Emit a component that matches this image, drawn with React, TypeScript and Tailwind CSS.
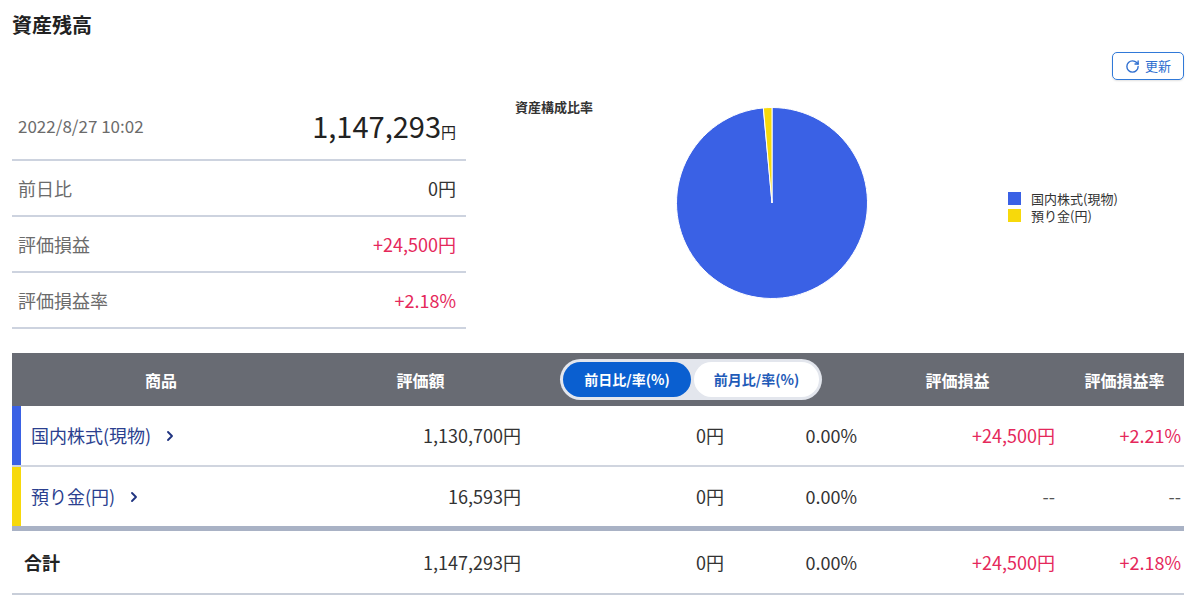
import { RotateCw, ChevronRight } from "lucide-react";

const RED = "text-[#e5285b]";

function SummaryRow({ label, value, red }: { label: string; value: string; red?: boolean }) {
  return (
    <div className="h-[56px] flex items-center justify-between pl-[6px] pr-[10px] border-b-2 border-[#cdd3df]">
      <span className="text-[18px] text-[#6b6b6b]">{label}</span>
      <span className={`text-[18px] ${red ? RED : "text-[#333]"}`}>{value}</span>
    </div>
  );
}

function Pie() {
  const cx = 96, cy = 96, r = 95.5;
  const frac = 16593 / 1147293;
  const a = frac * 2 * Math.PI;
  const x = cx - r * Math.sin(a);
  const y = cy - r * Math.cos(a);
  return (
    <svg width="192" height="192" viewBox="0 0 192 192">
      <path d={`M${cx} ${cy} L${cx} ${cy - r} A${r} ${r} 0 1 1 ${x} ${y} Z`} fill="#3a61e5" stroke="#fff" strokeWidth="1" />
      <path d={`M${cx} ${cy} L${x} ${y} A${r} ${r} 0 0 1 ${cx} ${cy - r} Z`} fill="#f7d90b" stroke="#fff" strokeWidth="1" />
    </svg>
  );
}

const cols = "grid grid-cols-[298px_221px_203px_132px_199px_119px]";

function DataRow({ color, name, amount, day, rate, pl, plr, red }: { color: string; name: string; amount: string; day: string; rate: string; pl: string; plr: string; red?: boolean }) {
  return (
    <div className={`${cols} h-[61px] border-b-2 border-[#d0d5df] text-[18px] text-[#333]`}>
      <div className="flex items-stretch">
        <div className={`w-[9px] ${color}`} />
        <div className="flex items-center pl-[10px] text-[#2b3f8f]">
          <span>{name}</span>
          <ChevronRight size={16} strokeWidth={2.8} className="ml-[11px] text-[#1f3380]" />
        </div>
      </div>
      <div className="flex items-center justify-end pr-[10px]">{amount}</div>
      <div className="flex items-center justify-end pr-[10px]">{day}</div>
      <div className="flex items-center justify-end pr-[9px]">{rate}</div>
      <div className={`flex items-center justify-end pr-[10px] ${red ? RED : "text-[#555]"}`}>{pl}</div>
      <div className={`flex items-center justify-end pr-[3px] ${red ? RED : "text-[#555]"}`}>{plr}</div>
    </div>
  );
}

export default function App() {
  return (
    <div className="w-[1200px] h-[609px] bg-white overflow-hidden font-['Noto_Sans_CJK_JP','Noto_Sans',sans-serif] text-[#333]">
      <div className="pl-[12px] pr-[16px]">
        <h1 className="pt-[12px] h-[52px] text-[20px] font-bold leading-[26px] text-[#222]">資産残高</h1>
        <div className="flex justify-end h-[27px]">
          <button className="flex items-center justify-center gap-[5px] h-[28px] w-[72px] border-[1.5px] border-[#3079d8] rounded-[5px] text-[#2f6fd0] text-[13px] shadow-[0_1px_2px_rgba(0,0,0,0.12)]">
            <RotateCw size={15} strokeWidth={2.2} />
            <span>更新</span>
          </button>
        </div>

        <div className="flex mt-[21px]">
          <div className="w-[454px]">
            <div className="h-[61px] flex items-center justify-between pl-[6px] pr-[10px] pb-[8px] border-b-2 border-[#cdd3df]">
              <span className="text-[17px] text-[#6b6b6b]">2022/8/27 10:02</span>
              <span className="flex items-baseline text-[#222]">
                <span className="text-[29px] leading-none">1,147,293</span>
                <span className="text-[15px] leading-none">円</span>
              </span>
            </div>
            <SummaryRow label="前日比" value="0円" />
            <SummaryRow label="評価損益" value="+24,500円" red />
            <SummaryRow label="評価損益率" value="+2.18%" red />
          </div>

          <div className="flex items-start ml-[49px]">
            <div className="w-[161px] text-[13px] font-bold leading-[14px] text-[#333]">資産構成比率</div>
            <div className="mt-[7px]">
              <Pie />
            </div>
            <div className="ml-[140px] mt-[90px] flex flex-col text-[13px] leading-[17px] text-[#333]">
              <div className="flex items-center">
                <span className="w-[13px] h-[13px] bg-[#3a61e5] mr-[10px]" />
                <span>国内株式(現物)</span>
              </div>
              <div className="flex items-center">
                <span className="w-[13px] h-[13px] bg-[#f7d90b] mr-[10px]" />
                <span>預り金(円)</span>
              </div>
            </div>
          </div>
        </div>

        <div className="mt-[24px]">
          <div className={`${cols} h-[53px] bg-[#686b73] text-white font-bold text-[16px]`}>
            <div className="flex items-center justify-center">商品</div>
            <div className="flex items-center justify-center">評価額</div>
            <div className="col-span-2 flex items-center pl-[29px]">
              <div className="flex w-[262px] h-[41px] rounded-full bg-[#e3e6ed] p-[3px]">
                <div className="w-[128px] rounded-full bg-[#0a5fd0] text-white text-[14px] flex items-center justify-center">前日比/率(%)</div>
                <div className="flex-1 ml-[3px] rounded-full bg-white text-[#1f5bb8] text-[14px] flex items-center justify-center">前月比/率(%)</div>
              </div>
            </div>
            <div className="flex items-center justify-center pr-[16px]">評価損益</div>
            <div className="flex items-center justify-center">評価損益率</div>
          </div>

          <DataRow color="bg-[#3a61e5]" name="国内株式(現物)" amount="1,130,700円" day="0円" rate="0.00%" pl="+24,500円" plr="+2.21%" red />
          <DataRow color="bg-[#f7d90b]" name="預り金(円)" amount="16,593円" day="0円" rate="0.00%" pl="--" plr="--" />
          <div className="h-[5px] bg-[#a9b2c5] -mt-[2px]" />

          <div className={`${cols} h-[64px] border-b-2 border-[#c8ced9] text-[18px] text-[#333]`}>
            <div className="flex items-center pl-[12px] font-bold text-[#222]">合計</div>
            <div className="flex items-center justify-end pr-[10px]">1,147,293円</div>
            <div className="flex items-center justify-end pr-[10px]">0円</div>
            <div className="flex items-center justify-end pr-[9px]">0.00%</div>
            <div className={`flex items-center justify-end pr-[10px] ${RED}`}>+24,500円</div>
            <div className={`flex items-center justify-end pr-[3px] ${RED}`}>+2.18%</div>
          </div>
        </div>
      </div>
    </div>
  );
}
